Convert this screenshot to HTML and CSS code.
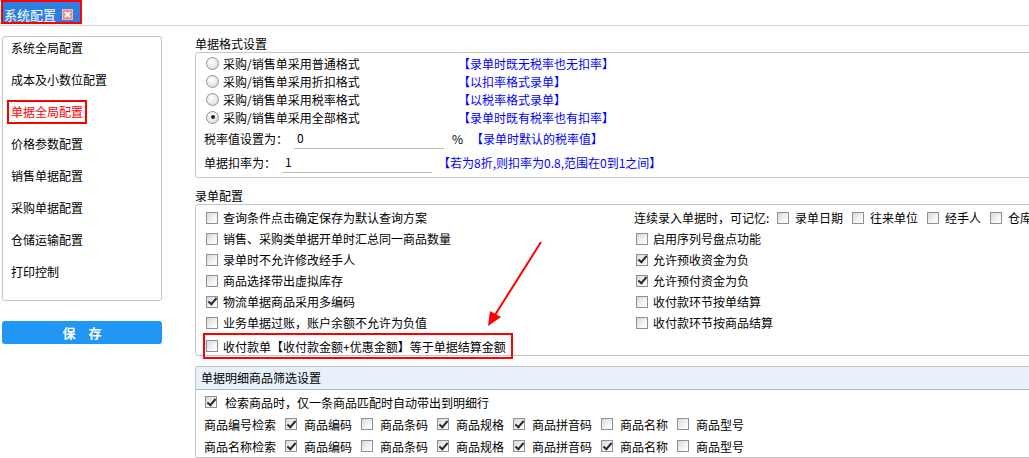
FILE: index.html
```html
<!DOCTYPE html>
<html lang="zh-CN">
<head>
    <meta charset="utf-8">
    <title>系统配置</title>
    <link rel="stylesheet" href="styles.css">
</head>
<body>
    <div class="tabbar">
        <div class="tab">系统配置
            <span class="tab-close">
                <svg width="11" height="11" viewBox="0 0 11 11">
                    <rect x="0.5" y="0.5" width="10" height="10" fill="#ec8a8a" stroke="#f6b9b9"/>
                    <path d="M3 3 L8 8 M8 3 L3 8" stroke="#fff" stroke-width="2"/>
                </svg>
            </span>
        </div>
    </div>

    <div class="main">
        <div class="sidebar">
            <div class="menu">
                <div class="menu-item">系统全局配置</div>
                <div class="menu-item">成本及小数位配置</div>
                <div class="menu-item"><span class="menu-active">单据全局配置</span></div>
                <div class="menu-item">价格参数配置</div>
                <div class="menu-item">销售单据配置</div>
                <div class="menu-item">采购单据配置</div>
                <div class="menu-item">仓储运输配置</div>
                <div class="menu-item">打印控制</div>
            </div>
            <div class="save-btn">保　存</div>
        </div>

        <div class="content">
            <div class="section-title">单据格式设置</div>
            <div class="box box-format">
                <div class="opt-row">
                    <span class="opt-label"><span class="radio"></span>采购/销售单采用普通格式</span>
                    <span class="note">【录单时既无税率也无扣率】</span>
                </div>
                <div class="opt-row">
                    <span class="opt-label"><span class="radio"></span>采购/销售单采用折扣格式</span>
                    <span class="note">【以扣率格式录单】</span>
                </div>
                <div class="opt-row">
                    <span class="opt-label"><span class="radio"></span>采购/销售单采用税率格式</span>
                    <span class="note">【以税率格式录单】</span>
                </div>
                <div class="opt-row">
                    <span class="opt-label"><span class="radio on"></span>采购/销售单采用全部格式</span>
                    <span class="note">【录单时既有税率也有扣率】</span>
                </div>
                <div class="field-row">
                    <span class="field-label tax-label">税率值设置为：</span>
                    <input class="line-input" type="text" value="0">
                    <span class="unit">%</span>
                    <span class="note note-tax">【录单时默认的税率值】</span>
                </div>
                <div class="field-row">
                    <span class="field-label rate-label">单据扣率为：</span>
                    <input class="line-input" type="text" value="1">
                    <span class="note note-rate">【若为8折,则扣率为0.8,范围在0到1之间】</span>
                </div>
            </div>

            <div class="section-title section-gap">录单配置</div>
            <div class="box box-entry">
                <div class="entry-col entry-left">
                    <div class="check-row"><span class="cb"></span>查询条件点击确定保存为默认查询方案</div>
                    <div class="check-row"><span class="cb"></span>销售、采购类单据开单时汇总同一商品数量</div>
                    <div class="check-row"><span class="cb"></span>录单时不允许修改经手人</div>
                    <div class="check-row"><span class="cb"></span>商品选择带出虚拟库存</div>
                    <div class="check-row"><span class="cb on"></span>物流单据商品采用多编码</div>
                    <div class="check-row"><span class="cb"></span>业务单据过账，账户余额不允许为负值</div>
                    <div class="check-row">
                        <span class="mark"><span class="cb"></span>收付款单【收付款金额+优惠金额】等于单据结算金额</span>
                    </div>
                </div>
                <div class="entry-col entry-right">
                    <div class="check-row">
                        <span class="mem-label">连续录入单据时，可记忆:</span>
                        <span class="item"><span class="cb"></span>录单日期</span>
                        <span class="item"><span class="cb"></span>往来单位</span>
                        <span class="item"><span class="cb"></span>经手人</span>
                        <span class="item"><span class="cb"></span>仓库</span>
                    </div>
                    <div class="check-row"><span class="cb"></span>启用序列号盘点功能</div>
                    <div class="check-row"><span class="cb on"></span>允许预收资金为负</div>
                    <div class="check-row"><span class="cb on"></span>允许预付资金为负</div>
                    <div class="check-row"><span class="cb"></span>收付款环节按单结算</div>
                    <div class="check-row"><span class="cb"></span>收付款环节按商品结算</div>
                </div>
            </div>

            <div class="box box-filter">
                <div class="filter-head">单据明细商品筛选设置</div>
                <div class="filter-body">
                    <div class="filter-row"><span class="cb on first-cb"></span>检索商品时，仅一条商品匹配时自动带出到明细行</div>
                    <div class="filter-row">
                        <span class="filter-label">商品编号检索</span>
                        <span class="item"><span class="cb on"></span>商品编码</span>
                        <span class="item"><span class="cb"></span>商品条码</span>
                        <span class="item"><span class="cb on"></span>商品规格</span>
                        <span class="item"><span class="cb on"></span>商品拼音码</span>
                        <span class="item"><span class="cb"></span>商品名称</span>
                        <span class="item"><span class="cb"></span>商品型号</span>
                    </div>
                    <div class="filter-row">
                        <span class="filter-label">商品名称检索</span>
                        <span class="item"><span class="cb on"></span>商品编码</span>
                        <span class="item"><span class="cb"></span>商品条码</span>
                        <span class="item"><span class="cb on"></span>商品规格</span>
                        <span class="item"><span class="cb on"></span>商品拼音码</span>
                        <span class="item"><span class="cb on"></span>商品名称</span>
                        <span class="item"><span class="cb"></span>商品型号</span>
                    </div>
                </div>
            </div>
        </div>
    </div>

    <!-- annotation arrow -->
    <svg class="arrow" width="70" height="100" viewBox="0 0 70 100">
        <line x1="61" y1="7" x2="15" y2="80" stroke="#f00" stroke-width="2"/>
        <polygon points="8,91 21,82 10,76" fill="#f00"/>
    </svg>
</body>
</html>
```

FILE: styles.css
```css
body {
    margin: 0;
    font-family: "Noto Sans CJK SC", "Noto Sans", sans-serif;
    font-size: 12px;
    color: #000;
    background: #fff;
    overflow: hidden;
}
.tabbar {
    height: 25px;
    border-bottom: 1px solid #d4d4d4;
}
.tab {
    display: inline-flex;
    align-items: center;
    box-sizing: border-box;
    width: 81px;
    height: 24px;
    margin-left: 1px;
    padding: 5px 0 0 1px;
    border: 2px solid #f00;
    background: #2c7fde;
    color: #fff;
    font-size: 13px;
    line-height: 15px;
}
.tab-close {
    display: inline-flex;
    margin-left: 6px;
}
.main {
    display: flex;
    padding-top: 10px;
}
.sidebar {
    width: 160px;
    margin-left: 2px;
    flex-shrink: 0;
}
.menu {
    box-sizing: border-box;
    height: 265px;
    padding-top: 1px;
    border: 1px solid #c4c4c4;
    border-radius: 3px;
}
.menu-item {
    display: flex;
    align-items: center;
    height: 20px;
    margin-bottom: 12px;
    padding-left: 8px;
    line-height: 20px;
}
.menu-active {
    margin-left: -4px;
    padding: 0 2px;
    border: 2px solid #f00;
    color: #f00;
}
.save-btn {
    margin-top: 20px;
    height: 23px;
    line-height: 23px;
    border-radius: 3px;
    background: #2196f3;
    color: #fff;
    font-size: 13px;
    font-weight: bold;
    text-align: center;
}
.content {
    width: 880px;
    margin-left: 33px;
    flex-shrink: 0;
}
.section-title {
    height: 16px;
    line-height: 16px;
}
.section-gap {
    margin-top: 10px;
}
.box {
    border: 1px solid #c6c6c6;
    border-radius: 3px;
}
.box-format {
    padding: 1px 0 3px 8px;
}
.opt-row {
    display: flex;
    align-items: center;
    height: 18px;
}
.opt-label {
    display: flex;
    align-items: center;
    width: 254px;
}
.radio {
    display: inline-flex;
    align-items: center;
    justify-content: center;
    box-sizing: border-box;
    width: 13px;
    height: 13px;
    margin: 0 4px 0 2px;
    border: 1px solid #929292;
    border-radius: 50%;
    background: radial-gradient(circle at 40% 35%, #fff 0%, #e6e6e6 60%, #cfcfcf 100%);
}
.radio.on::after {
    content: "";
    width: 4px;
    height: 4px;
    border-radius: 50%;
    background: #222;
}
.note {
    color: #00f;
}
.field-row {
    display: flex;
    align-items: center;
    height: 24px;
}
.tax-label {
    width: 90px;
}
.rate-label {
    width: 78px;
}
.line-input {
    box-sizing: border-box;
    width: 150px;
    height: 21px;
    padding: 0 3px;
    border: none;
    border-bottom: 1px solid #bcbcbc;
    font-family: inherit;
    font-size: 12px;
    outline: none;
}
.unit {
    margin-left: 8px;
}
.note-tax {
    margin-left: 8px;
}
.note-rate {
    margin-left: 6px;
}
.box-entry {
    display: flex;
    padding: 2px 0 1px 8px;
}
.entry-left {
    width: 430px;
}
.check-row {
    display: flex;
    align-items: center;
    height: 21px;
    white-space: nowrap;
}
.cb {
    display: inline-flex;
    align-items: center;
    justify-content: center;
    box-sizing: border-box;
    flex-shrink: 0;
    width: 12px;
    height: 12px;
    margin: 0 5px 0 2px;
    border: 1px solid #8f9090;
    background: linear-gradient(135deg, #d8d8d8 0%, #f4f4f4 60%, #fff 100%);
}
.cb.on::after {
    content: "";
    width: 3px;
    height: 7px;
    margin-top: -2px;
    border: solid #2a2a2a;
    border-width: 0 2px 2px 0;
    transform: rotate(40deg);
}
.mark {
    display: inline-flex;
    align-items: center;
    align-self: flex-start;
    box-sizing: border-box;
    height: 26px;
    margin-left: -1px;
    padding-right: 5px;
    border: 2px solid #f00;
}
.mark .cb {
    margin-left: 1px;
}
.mem-label {
    width: 143px;
}
.item {
    display: inline-flex;
    align-items: center;
}
.entry-right .item {
    margin-right: 9px;
}
.entry-right .item .cb {
    margin: 0 6px 0 0;
}
.box-filter {
    margin-top: 10px;
    border-radius: 2px;
}
.filter-head {
    height: 22px;
    line-height: 22px;
    padding-left: 5px;
    background: #e7f0fb;
    border-bottom: 1px solid #a9b8c8;
}
.filter-body {
    padding: 1px 0 0 8px;
}
.filter-row {
    display: flex;
    align-items: center;
    height: 22px;
    white-space: nowrap;
}
.first-cb {
    margin: 0 8px 0 1px;
}
.filter-row .item .cb {
    margin: 0 7px 0 9px;
}
.arrow {
    position: absolute;
    left: 480px;
    top: 235px;
}
```
